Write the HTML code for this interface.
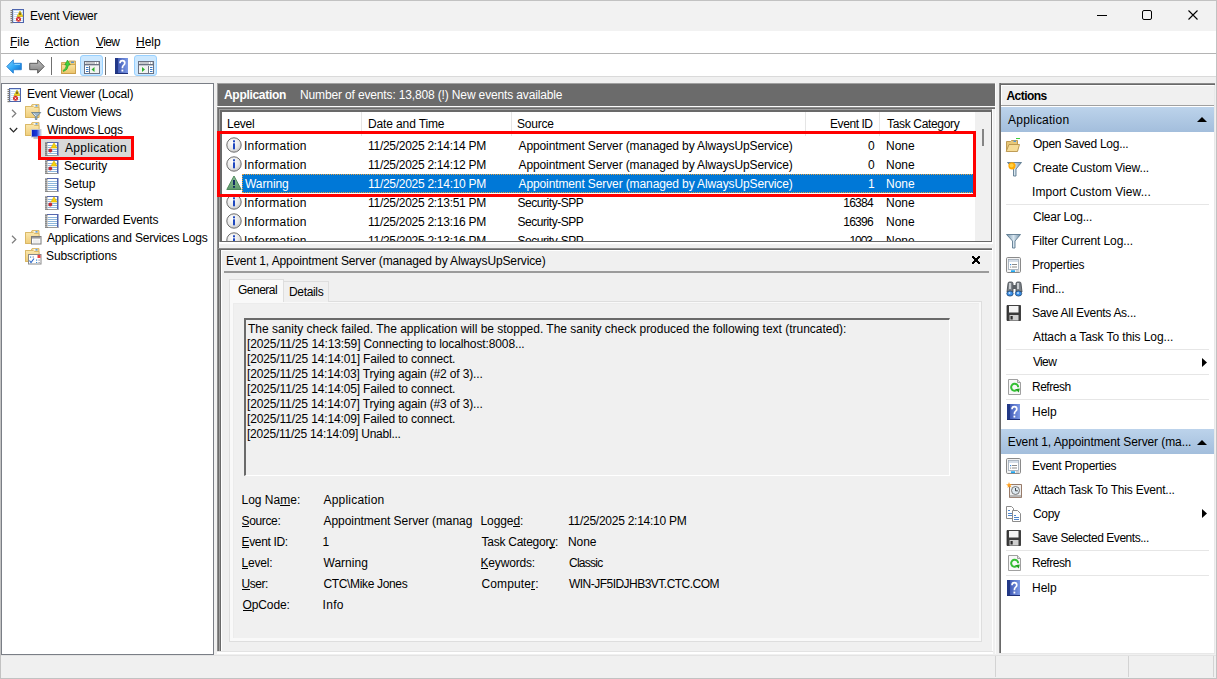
<!DOCTYPE html><html><head><meta charset="utf-8"><style>
*{margin:0;padding:0;box-sizing:border-box}
html,body{width:1217px;height:679px;overflow:hidden;background:#f0f0f0;font-family:"Liberation Sans",sans-serif;font-size:12px;color:#000}
.t{position:absolute;line-height:16px;white-space:nowrap}
.r{position:absolute}
.b{font-weight:bold}
.w{color:#fff}
u{text-decoration:none;position:relative}
u:after{content:"";position:absolute;left:0;right:0;bottom:1px;height:1px;background:#000}
svg{position:absolute;overflow:visible}
.clip{position:absolute;overflow:hidden}
</style></head><body><div class="r" style="left:0px;top:0px;width:1217px;height:31px;background:#f2f2f2"></div>
<div class="r" style="left:0px;top:31px;width:1217px;height:22px;background:#fff"></div>
<div class="r" style="left:0px;top:53px;width:1217px;height:1px;background:#b4b4b4"></div>
<div class="r" style="left:0px;top:54px;width:1217px;height:22px;background:#fff"></div>
<div class="r" style="left:0px;top:76px;width:1217px;height:1px;background:#dadada"></div>
<div class="r" style="left:0px;top:0px;width:1217px;height:1px;background:#c2c2c2"></div>
<div class="r" style="left:0px;top:0px;width:1px;height:679px;background:#c2c2c2"></div>
<div class="r" style="left:1216px;top:0px;width:1px;height:679px;background:#c2c2c2"></div>
<div class="r" style="left:0px;top:678px;width:1217px;height:1px;background:#c2c2c2"></div>
<div class="t " style="left:calc(31px + -1.00px);top:8px;letter-spacing:-0.273px;">Event Viewer</div>
<svg style="left:9px;top:8px" width="16" height="16" viewBox="0 0 16 16" shape-rendering="auto"><rect x="3.5" y="1.5" width="11" height="13" fill="#c9ddf3" stroke="#4d64ad"/>
<g fill="#ffffff"><rect x="5" y="3" width="8.5" height="1"/><rect x="5" y="5" width="8.5" height="1"/><rect x="5" y="7" width="8.5" height="1"/><rect x="5" y="9" width="8.5" height="1"/><rect x="5" y="11" width="8.5" height="1"/><rect x="5" y="13" width="8.5" height="1"/></g>
<g fill="#7a7a7a"><rect x="1.5" y="2" width="2.5" height="1.2"/><rect x="1.5" y="4" width="2.5" height="1.2"/><rect x="1.5" y="6" width="2.5" height="1.2"/><rect x="1.5" y="8" width="2.5" height="1.2"/><rect x="1.5" y="10" width="2.5" height="1.2"/><rect x="1.5" y="12" width="2.5" height="1.2"/><rect x="1.5" y="14" width="2.5" height="1.2"/></g>
<path d="M11 3 L14 8.5 L8 8.5 Z" fill="#f2d21a" stroke="#c8a800" stroke-width="0.6" stroke-linejoin="round"/>
<rect x="10.5" y="4.6" width="1" height="2.4" fill="#1a1a1a"/>
<circle cx="9.5" cy="11.3" r="2.5" fill="#d42a2a"/>
<path d="M8.7 10.5 L10.3 12.1 M10.3 10.5 L8.7 12.1" stroke="#fff" stroke-width="0.9"/></svg>
<div class="r" style="left:1097px;top:15px;width:10px;height:1px;background:#000"></div>
<div class="r" style="left:1142px;top:10px;width:10px;height:10px;border:1px solid #000;border-radius:2px"></div>
<svg style="left:1188px;top:10px" width="10" height="10" viewBox="0 0 10 10" shape-rendering="auto"><path d="M0.5 0.5 L9.5 9.5 M9.5 0.5 L0.5 9.5" stroke="#000" stroke-width="1.1"/></svg>
<div class="t " style="left:calc(11px + -1.00px);top:34px;letter-spacing:0.000px;"><u>F</u>ile</div>
<div class="t " style="left:calc(45px + 0.00px);top:34px;letter-spacing:0.200px;"><u>A</u>ction</div>
<div class="t " style="left:calc(96px + 0.00px);top:34px;letter-spacing:-0.667px;"><u>V</u>iew</div>
<div class="t " style="left:calc(137px + -1.00px);top:34px;letter-spacing:0.000px;"><u>H</u>elp</div>
<svg style="left:6px;top:59px" width="17" height="15" viewBox="0 0 17 15" shape-rendering="auto"><defs><linearGradient id="gb" x1="0" y1="0" x2="1" y2="1"><stop offset="0" stop-color="#7fd4ff"/><stop offset="0.5" stop-color="#2ea6f5"/><stop offset="1" stop-color="#0a62c4"/></linearGradient></defs>
<path d="M0.8 7.5 L7.3 0.8 L7.3 4.3 L15.3 4.3 L15.3 10.7 L7.3 10.7 L7.3 14.2 Z" fill="url(#gb)" stroke="#2f86d6" stroke-width="1" stroke-linejoin="round"/>
<path d="M8.5 5.5 L14 5.5" stroke="#9fdcff" stroke-width="0.8"/></svg>
<svg style="left:28px;top:59px" width="17" height="15" viewBox="0 0 17 15" shape-rendering="auto"><defs><linearGradient id="gg" x1="0" y1="0" x2="0" y2="1"><stop offset="0" stop-color="#c4c4c4"/><stop offset="1" stop-color="#7c7c7c"/></linearGradient></defs>
<path d="M16.2 7.5 L9.7 0.8 L9.7 4.3 L1.7 4.3 L1.7 10.7 L9.7 10.7 L9.7 14.2 Z" fill="url(#gg)" stroke="#5a5a5a" stroke-width="1" stroke-linejoin="round"/></svg>
<div class="r" style="left:51px;top:57px;width:1px;height:18px;background:#707070"></div>
<svg style="left:60px;top:58px" width="17" height="17" viewBox="0 0 17 17" shape-rendering="auto"><defs><linearGradient id="tfd" x1="0" y1="0" x2="0" y2="1"><stop offset="0" stop-color="#fae3a0"/><stop offset="1" stop-color="#eac36a"/></linearGradient></defs>
<path d="M1.5 4.5 L8 4.5 L9 3 L15.5 3 L15.5 15.5 L1.5 15.5 Z" fill="#eccb78" stroke="#c79a45" stroke-width="0.8"/>
<rect x="11" y="3.6" width="3" height="1.2" fill="#3d8be0"/>
<path d="M1.5 6.5 L15.5 6.5 L15.5 15.5 L1.5 15.5 Z" fill="url(#tfd)" stroke="#c79a45" stroke-width="0.8"/>
<path d="M3 12.5 Q6 11 6.5 7 L4.8 7 L7.5 2 L10.2 7 L8.5 7 Q8 12 3.5 13.5 Z" fill="#3fd23f" stroke="#1f9a1f" stroke-width="0.6" stroke-linejoin="round"/></svg>
<div class="r" style="left:80px;top:55px;width:23px;height:21px;background:#cce8ff;border:1px solid #99d1ff;border-radius:3px"></div>
<div class="r" style="left:134px;top:55px;width:23px;height:21px;background:#cce8ff;border:1px solid #99d1ff;border-radius:3px"></div>
<svg style="left:84px;top:61px" width="16" height="13" viewBox="0 0 16 13" shape-rendering="auto"><rect x="0.5" y="0.5" width="15" height="12" fill="#ffffff" stroke="#6b7282"/><rect x="1.5" y="1.5" width="9.5" height="1" fill="#8c9098"/><rect x="12" y="1.5" width="1" height="1" fill="#8c9098"/><rect x="14" y="1.5" width="1" height="1" fill="#8c9098"/><line x1="1" y1="3.5" x2="15" y2="3.5" stroke="#6b7282"/><rect x="1" y="4" width="14" height="1" fill="#c4c8d0"/><rect x="6" y="5" width="9" height="7" fill="#f2f2f2"/><line x1="5.5" y1="5" x2="5.5" y2="12" stroke="#6b7282"/><rect x="2" y="6" width="2.5" height="1" fill="#3a7cc8"/><rect x="2" y="8" width="2.5" height="1" fill="#3a7cc8"/><rect x="2" y="10" width="2.5" height="1" fill="#3a7cc8"/><path d="M10.5 6 L7.5 8.5 L10.5 11 Z" fill="#2cb02c"/></svg>
<svg style="left:138px;top:61px" width="16" height="13" viewBox="0 0 16 13" shape-rendering="auto"><rect x="0.5" y="0.5" width="15" height="12" fill="#ffffff" stroke="#6b7282"/><rect x="1.5" y="1.5" width="9.5" height="1" fill="#8c9098"/><rect x="12" y="1.5" width="1" height="1" fill="#8c9098"/><rect x="14" y="1.5" width="1" height="1" fill="#8c9098"/><line x1="1" y1="3.5" x2="15" y2="3.5" stroke="#6b7282"/><rect x="1" y="4" width="14" height="1" fill="#c4c8d0"/><rect x="1" y="5" width="9" height="7" fill="#f2f2f2"/><line x1="10.5" y1="5" x2="10.5" y2="12" stroke="#6b7282"/><rect x="12" y="6" width="2.5" height="1" fill="#3a7cc8"/><rect x="12" y="8" width="2.5" height="1" fill="#3a7cc8"/><rect x="12" y="10" width="2.5" height="1" fill="#3a7cc8"/><path d="M4 6 L7 8.5 L4 11 Z" fill="#2cb02c"/></svg>
<div class="r" style="left:105px;top:57px;width:1px;height:18px;background:#707070"></div>
<svg style="left:115px;top:58px" width="13" height="16" viewBox="0 0 13 16" shape-rendering="auto"><defs><linearGradient id="hq1" x1="0" y1="0" x2="1" y2="0"><stop offset="0" stop-color="#3049a8"/><stop offset="1" stop-color="#7d9ae6"/></linearGradient></defs>
<rect x="0" y="0" width="13" height="16" fill="url(#hq1)"/>
<rect x="0" y="0" width="3" height="16" fill="#223887"/>
<path d="M0 15 L13 15 L13 16 L0 16 Z" fill="#1d2f78"/>
<path d="M5 5.2 Q5 2.6 7.4 2.6 Q9.8 2.6 9.8 5 Q9.8 6.6 8.2 7.6 Q7.4 8.2 7.4 10.2" fill="none" stroke="#fff" stroke-width="1.7"/>
<rect x="6.5" y="11.6" width="1.8" height="1.9" fill="#fff"/></svg>
<div class="r" style="left:1px;top:83px;width:213px;height:572px;background:#fff;border:1px solid #7a7e86"></div>
<svg style="left:6px;top:87px" width="16" height="16" viewBox="0 0 16 16" shape-rendering="auto"><rect x="3.5" y="1.5" width="11" height="13" fill="#c9ddf3" stroke="#4d64ad"/>
<g fill="#ffffff"><rect x="5" y="3" width="8.5" height="1"/><rect x="5" y="5" width="8.5" height="1"/><rect x="5" y="7" width="8.5" height="1"/><rect x="5" y="9" width="8.5" height="1"/><rect x="5" y="11" width="8.5" height="1"/><rect x="5" y="13" width="8.5" height="1"/></g>
<g fill="#7a7a7a"><rect x="1.5" y="2" width="2.5" height="1.2"/><rect x="1.5" y="4" width="2.5" height="1.2"/><rect x="1.5" y="6" width="2.5" height="1.2"/><rect x="1.5" y="8" width="2.5" height="1.2"/><rect x="1.5" y="10" width="2.5" height="1.2"/><rect x="1.5" y="12" width="2.5" height="1.2"/><rect x="1.5" y="14" width="2.5" height="1.2"/></g>
<path d="M11 3 L14 8.5 L8 8.5 Z" fill="#f2d21a" stroke="#c8a800" stroke-width="0.6" stroke-linejoin="round"/>
<rect x="10.5" y="4.6" width="1" height="2.4" fill="#1a1a1a"/>
<circle cx="9.5" cy="11.3" r="2.5" fill="#d42a2a"/>
<path d="M8.7 10.5 L10.3 12.1 M10.3 10.5 L8.7 12.1" stroke="#fff" stroke-width="0.9"/></svg>
<div class="t " style="left:calc(28px + -1.00px);top:86px;letter-spacing:-0.211px;">Event Viewer (Local)</div>
<svg style="left:11px;top:109px" width="6" height="9" viewBox="0 0 6 9" shape-rendering="auto"><path d="M1 0.8 L4.8 4.5 L1 8.2" fill="none" stroke="#7d7d7d" stroke-width="1.2"/></svg>
<svg style="left:9px;top:127px" width="9" height="6" viewBox="0 0 9 6" shape-rendering="auto"><path d="M0.8 1 L4.5 4.8 L8.2 1" fill="none" stroke="#262626" stroke-width="1.2"/></svg>
<svg style="left:11px;top:235px" width="6" height="9" viewBox="0 0 6 9" shape-rendering="auto"><path d="M1 0.8 L4.8 4.5 L1 8.2" fill="none" stroke="#7d7d7d" stroke-width="1.2"/></svg>
<svg style="left:25px;top:104px" width="17" height="17" viewBox="0 0 17 17" shape-rendering="auto"><defs><linearGradient id="fd1" x1="0" y1="0" x2="0" y2="1"><stop offset="0" stop-color="#fbe7ad"/><stop offset="1" stop-color="#efcd7a"/></linearGradient></defs><path d="M0.5 2.5 L6 2.5 L7 0.5 L14 0.5 L14 13.5 L0.5 13.5 Z" fill="#f3d88f" stroke="#d6b25e" stroke-width="0.8"/><path d="M0.5 2.5 L8.5 2.5 L9.5 3.5 L14 3.5 L14 13.5 L0.5 13.5 Z" fill="url(#fd1)" stroke="#d6b25e" stroke-width="0.8"/><rect x="8.5" y="1.2" width="4" height="1.3" fill="#ffffff"/><rect x="10.5" y="1.2" width="2" height="1.3" fill="#3d8be0"/><path d="M6.5 8.5 L15.8 8.5 L12 12.5 L12 15.5 L10.3 15.5 L10.3 12.5 Z" fill="#9db6c8" stroke="#56707f" stroke-width="0.7" stroke-linejoin="round"/><path d="M8.5 9.5 L11 12" stroke="#eef4f8" stroke-width="0.8"/></svg>
<div class="t " style="left:calc(47px + 0.00px);top:104px;letter-spacing:-0.182px;">Custom Views</div>
<svg style="left:25px;top:122px" width="17" height="17" viewBox="0 0 17 17" shape-rendering="auto"><defs><linearGradient id="fd2" x1="0" y1="0" x2="0" y2="1"><stop offset="0" stop-color="#fbe7ad"/><stop offset="1" stop-color="#efcd7a"/></linearGradient></defs><path d="M0.5 2.5 L6 2.5 L7 0.5 L14 0.5 L14 13.5 L0.5 13.5 Z" fill="#f3d88f" stroke="#d6b25e" stroke-width="0.8"/><path d="M0.5 2.5 L8.5 2.5 L9.5 3.5 L14 3.5 L14 13.5 L0.5 13.5 Z" fill="url(#fd2)" stroke="#d6b25e" stroke-width="0.8"/><rect x="8.5" y="1.2" width="4" height="1.3" fill="#ffffff"/><rect x="10.5" y="1.2" width="2" height="1.3" fill="#3d8be0"/><defs><linearGradient id="mon" x1="0" y1="0" x2="1" y2="0"><stop offset="0" stop-color="#0a1ec0"/><stop offset="0.55" stop-color="#1a3ad8"/><stop offset="1" stop-color="#c8d8f4"/></linearGradient></defs><rect x="6.5" y="7.5" width="9.5" height="7.5" fill="url(#mon)" stroke="#c4c8d0" stroke-width="0.9"/><rect x="8.5" y="15.5" width="5" height="1" fill="#8a8a8a"/></svg>
<div class="t " style="left:calc(47px + 0.00px);top:122px;letter-spacing:-0.182px;">Windows Logs</div>
<div class="r" style="left:41px;top:139px;width:90px;height:18px;background:#d9d9d9"></div>
<div class="r" style="left:38px;top:136px;width:96px;height:24px;border:3px solid #ff0000"></div>
<svg style="left:44px;top:141px" width="15" height="16" viewBox="0 0 15 16" shape-rendering="auto"><rect x="3" y="1" width="11" height="13.5" fill="#ffffff"/><g fill="#8db6dc"><rect x="4" y="4" width="9" height="1"/><rect x="4" y="6" width="9" height="1"/><rect x="4" y="8" width="9" height="1"/><rect x="4" y="10" width="9" height="1"/><rect x="4" y="12" width="9" height="1"/></g><rect x="3" y="1" width="11" height="1" fill="#5668b0"/><rect x="13" y="1" width="1.5" height="14" fill="#4f62ad"/><rect x="3" y="14" width="11" height="1" fill="#9a9a9a"/><g fill="#5a5a5a"><rect x="1" y="1.5" width="2.5" height="1.2"/><rect x="1" y="3.5" width="2.5" height="1.2"/><rect x="1" y="5.5" width="2.5" height="1.2"/><rect x="1" y="7.5" width="2.5" height="1.2"/><rect x="1" y="9.5" width="2.5" height="1.2"/><rect x="1" y="11.5" width="2.5" height="1.2"/><rect x="1" y="13.5" width="2.5" height="1.2"/></g><path d="M10 1.8 L13 7 L7 7 Z" fill="#f5d20c" stroke="#d8b000" stroke-width="0.6" stroke-linejoin="round"/><circle cx="6.3" cy="9.5" r="1.9" fill="#c8282e"/></svg>
<div class="t " style="left:calc(65px + 0.00px);top:140px;letter-spacing:0.300px;">Application</div>
<svg style="left:44px;top:159px" width="15" height="16" viewBox="0 0 15 16" shape-rendering="auto"><rect x="3" y="1" width="11" height="13.5" fill="#ffffff"/><g fill="#8db6dc"><rect x="4" y="4" width="9" height="1"/><rect x="4" y="6" width="9" height="1"/><rect x="4" y="8" width="9" height="1"/><rect x="4" y="10" width="9" height="1"/><rect x="4" y="12" width="9" height="1"/></g><rect x="3" y="1" width="11" height="1" fill="#5668b0"/><rect x="13" y="1" width="1.5" height="14" fill="#4f62ad"/><rect x="3" y="14" width="11" height="1" fill="#9a9a9a"/><g fill="#5a5a5a"><rect x="1" y="1.5" width="2.5" height="1.2"/><rect x="1" y="3.5" width="2.5" height="1.2"/><rect x="1" y="5.5" width="2.5" height="1.2"/><rect x="1" y="7.5" width="2.5" height="1.2"/><rect x="1" y="9.5" width="2.5" height="1.2"/><rect x="1" y="11.5" width="2.5" height="1.2"/><rect x="1" y="13.5" width="2.5" height="1.2"/></g><path d="M10 1.8 L13 7 L7 7 Z" fill="#f5d20c" stroke="#d8b000" stroke-width="0.6" stroke-linejoin="round"/><circle cx="6.3" cy="9.5" r="1.9" fill="#c8282e"/></svg>
<div class="t " style="left:calc(65px + -1.00px);top:158px;letter-spacing:0.000px;">Security</div>
<svg style="left:44px;top:177px" width="15" height="16" viewBox="0 0 15 16" shape-rendering="auto"><rect x="3" y="1" width="11" height="13.5" fill="#ffffff"/><g fill="#8db6dc"><rect x="4" y="4" width="9" height="1"/><rect x="4" y="6" width="9" height="1"/><rect x="4" y="8" width="9" height="1"/><rect x="4" y="10" width="9" height="1"/><rect x="4" y="12" width="9" height="1"/></g><rect x="3" y="1" width="11" height="1" fill="#5668b0"/><rect x="13" y="1" width="1.5" height="14" fill="#4f62ad"/><rect x="3" y="14" width="11" height="1" fill="#9a9a9a"/><g fill="#5a5a5a"><rect x="1" y="1.5" width="2.5" height="1.2"/><rect x="1" y="3.5" width="2.5" height="1.2"/><rect x="1" y="5.5" width="2.5" height="1.2"/><rect x="1" y="7.5" width="2.5" height="1.2"/><rect x="1" y="9.5" width="2.5" height="1.2"/><rect x="1" y="11.5" width="2.5" height="1.2"/><rect x="1" y="13.5" width="2.5" height="1.2"/></g></svg>
<div class="t " style="left:calc(65px + -1.00px);top:176px;letter-spacing:0.000px;">Setup</div>
<svg style="left:44px;top:195px" width="15" height="16" viewBox="0 0 15 16" shape-rendering="auto"><rect x="3" y="1" width="11" height="13.5" fill="#ffffff"/><g fill="#8db6dc"><rect x="4" y="4" width="9" height="1"/><rect x="4" y="6" width="9" height="1"/><rect x="4" y="8" width="9" height="1"/><rect x="4" y="10" width="9" height="1"/><rect x="4" y="12" width="9" height="1"/></g><rect x="3" y="1" width="11" height="1" fill="#5668b0"/><rect x="13" y="1" width="1.5" height="14" fill="#4f62ad"/><rect x="3" y="14" width="11" height="1" fill="#9a9a9a"/><g fill="#5a5a5a"><rect x="1" y="1.5" width="2.5" height="1.2"/><rect x="1" y="3.5" width="2.5" height="1.2"/><rect x="1" y="5.5" width="2.5" height="1.2"/><rect x="1" y="7.5" width="2.5" height="1.2"/><rect x="1" y="9.5" width="2.5" height="1.2"/><rect x="1" y="11.5" width="2.5" height="1.2"/><rect x="1" y="13.5" width="2.5" height="1.2"/></g><path d="M10 1.8 L13 7 L7 7 Z" fill="#f5d20c" stroke="#d8b000" stroke-width="0.6" stroke-linejoin="round"/><circle cx="6.3" cy="9.5" r="1.9" fill="#c8282e"/></svg>
<div class="t " style="left:calc(65px + -1.00px);top:194px;letter-spacing:-0.200px;">System</div>
<svg style="left:44px;top:213px" width="15" height="16" viewBox="0 0 15 16" shape-rendering="auto"><rect x="3" y="1" width="11" height="13.5" fill="#ffffff"/><g fill="#8db6dc"><rect x="4" y="4" width="9" height="1"/><rect x="4" y="6" width="9" height="1"/><rect x="4" y="8" width="9" height="1"/><rect x="4" y="10" width="9" height="1"/><rect x="4" y="12" width="9" height="1"/></g><rect x="3" y="1" width="11" height="1" fill="#5668b0"/><rect x="13" y="1" width="1.5" height="14" fill="#4f62ad"/><rect x="3" y="14" width="11" height="1" fill="#9a9a9a"/><g fill="#5a5a5a"><rect x="1" y="1.5" width="2.5" height="1.2"/><rect x="1" y="3.5" width="2.5" height="1.2"/><rect x="1" y="5.5" width="2.5" height="1.2"/><rect x="1" y="7.5" width="2.5" height="1.2"/><rect x="1" y="9.5" width="2.5" height="1.2"/><rect x="1" y="11.5" width="2.5" height="1.2"/><rect x="1" y="13.5" width="2.5" height="1.2"/></g></svg>
<div class="t " style="left:calc(65px + -1.00px);top:212px;letter-spacing:-0.200px;">Forwarded Events</div>
<svg style="left:25px;top:230px" width="17" height="17" viewBox="0 0 17 17" shape-rendering="auto"><defs><linearGradient id="fd3" x1="0" y1="0" x2="0" y2="1"><stop offset="0" stop-color="#fbe7ad"/><stop offset="1" stop-color="#efcd7a"/></linearGradient></defs><path d="M0.5 2.5 L6 2.5 L7 0.5 L14 0.5 L14 13.5 L0.5 13.5 Z" fill="#f3d88f" stroke="#d6b25e" stroke-width="0.8"/><path d="M0.5 2.5 L8.5 2.5 L9.5 3.5 L14 3.5 L14 13.5 L0.5 13.5 Z" fill="url(#fd3)" stroke="#d6b25e" stroke-width="0.8"/><rect x="8.5" y="1.2" width="4" height="1.3" fill="#ffffff"/><rect x="10.5" y="1.2" width="2" height="1.3" fill="#3d8be0"/><rect x="6.5" y="6.5" width="9.5" height="7.5" fill="#ffffff" stroke="#7a7a7a"/><rect x="7" y="7" width="8.5" height="1.6" fill="#9a9a9a"/><rect x="8" y="9.5" width="6.5" height="3.5" fill="#eeeeee"/></svg>
<div class="t " style="left:calc(47px + 0.00px);top:230px;letter-spacing:-0.207px;">Applications and Services Logs</div>
<svg style="left:25px;top:248px" width="17" height="17" viewBox="0 0 17 17" shape-rendering="auto"><defs><linearGradient id="fd4" x1="0" y1="0" x2="0" y2="1"><stop offset="0" stop-color="#fbe7ad"/><stop offset="1" stop-color="#efcd7a"/></linearGradient></defs><path d="M0.5 2.5 L6 2.5 L7 0.5 L14 0.5 L14 13.5 L0.5 13.5 Z" fill="#f3d88f" stroke="#d6b25e" stroke-width="0.8"/><path d="M0.5 2.5 L8.5 2.5 L9.5 3.5 L14 3.5 L14 13.5 L0.5 13.5 Z" fill="url(#fd4)" stroke="#d6b25e" stroke-width="0.8"/><rect x="8.5" y="1.2" width="4" height="1.3" fill="#ffffff"/><rect x="10.5" y="1.2" width="2" height="1.3" fill="#3d8be0"/><rect x="3.5" y="6.5" width="12.5" height="9.5" fill="#ffffff" stroke="#8a8a8a"/><rect x="12.5" y="7" width="3" height="3" fill="#e84040"/><g fill="#3a8ad0"><rect x="5" y="8.5" width="1.2" height="1.2"/><rect x="11" y="11.5" width="1.2" height="1.2"/><rect x="11" y="14" width="1.2" height="1"/></g><g fill="#8a8aa0"><rect x="7.5" y="8.5" width="1.5" height="1"/><rect x="13.5" y="11.5" width="1.2" height="1.2"/><rect x="13.5" y="14" width="1.2" height="1"/></g><path d="M4.5 12.5 L6 14.5 L9 10.5" stroke="#2a66c8" stroke-width="1.1" fill="none"/></svg>
<div class="t " style="left:calc(47px + -1.00px);top:248px;letter-spacing:-0.083px;">Subscriptions</div>
<div class="r" style="left:217px;top:83px;width:778px;height:23px;background:#6b6b6b;border-top:1px solid #a0a0a0;border-left:1px solid #a0a0a0"></div>
<div class="r" style="left:217px;top:106px;width:778px;height:1px;background:#fbfbfb"></div>
<div class="t b w" style="left:calc(224px + 0.00px);top:87px;letter-spacing:-0.300px;">Application</div>
<div class="t w" style="left:calc(301px + -1.00px);top:87px;letter-spacing:-0.146px;">Number of events: 13,808 (!) New events available</div>
<div class="r" style="left:217px;top:107px;width:2px;height:546px;background:#6d6d6d;border-left:1px solid #8c8c8c"></div>
<div class="r" style="left:217px;top:107px;width:778px;height:2px;background:#6d6d6d;border-top:1px solid #8c8c8c;border-left:1px solid #8c8c8c"></div>
<div class="r" style="left:219px;top:109px;width:774px;height:1px;background:#a0a0a0"></div>
<div class="r" style="left:219px;top:109px;width:1px;height:133px;background:#a0a0a0"></div>
<div class="r" style="left:220px;top:110px;width:772px;height:2px;background:#696969"></div>
<div class="r" style="left:220px;top:110px;width:2px;height:132px;background:#696969"></div>
<div class="r" style="left:222px;top:241px;width:770px;height:1px;background:#696969"></div>
<div class="r" style="left:991px;top:112px;width:1px;height:130px;background:#696969"></div>
<div class="r" style="left:992px;top:109px;width:1px;height:134px;background:#ffffff"></div>
<div class="r" style="left:219px;top:242px;width:774px;height:2px;background:#ffffff"></div>
<div class="r" style="left:222px;top:112px;width:769px;height:129px;background:#fff"></div>
<div class="r" style="left:361px;top:112px;width:1px;height:24px;background:#e5e5e5"></div>
<div class="r" style="left:511px;top:112px;width:1px;height:24px;background:#e5e5e5"></div>
<div class="r" style="left:805px;top:112px;width:1px;height:24px;background:#e5e5e5"></div>
<div class="r" style="left:879px;top:112px;width:1px;height:24px;background:#e5e5e5"></div>
<div class="t " style="left:calc(228px + -1.00px);top:116px;letter-spacing:-0.250px;">Level</div>
<div class="t " style="left:calc(369px + -1.00px);top:116px;letter-spacing:-0.125px;">Date and Time</div>
<div class="t " style="left:calc(518px + -1.00px);top:116px;letter-spacing:-0.200px;">Source</div>
<div class="t " style="left:calc(831px + -1.00px);top:116px;letter-spacing:-0.429px;">Event ID</div>
<div class="t " style="left:calc(887px + 0.00px);top:116px;letter-spacing:-0.333px;">Task Category</div>
<div class="r" style="left:975px;top:112px;width:16px;height:129px;background:#f0f0f0"></div>
<div class="r" style="left:982px;top:129px;width:2px;height:17px;background:#858585"></div>
<div class="clip" style="left:222px;top:136px;width:753px;height:105px">
<svg style="left:4px;top:1px" width="16" height="16" viewBox="0 0 16 16">
<defs><radialGradient id="ig0" cx="0.4" cy="0.35" r="0.75"><stop offset="0" stop-color="#ffffff"/><stop offset="0.6" stop-color="#e6e6e6"/><stop offset="1" stop-color="#b8b8b8"/></radialGradient></defs>
<circle cx="8" cy="8" r="7.2" fill="url(#ig0)" stroke="#707070" stroke-width="1"/>
<rect x="7" y="6.3" width="2" height="6" fill="#1f48c0"/><rect x="7" y="3.3" width="2" height="2" fill="#1f48c0"/></svg>
<div class="t " style="left:calc(23px + -1.00px);top:2px;letter-spacing:0.250px;">Information</div>
<div class="t " style="left:calc(147px + -1.00px);top:2px;letter-spacing:-0.280px;">11/25/2025 2:14:14 PM</div>
<div class="t " style="left:calc(296.5px + 0.00px);top:2px;letter-spacing:-0.113px;">Appointment Server (managed by AlwaysUpService)</div>
<div class="t " style="left:calc(646px + 0.00px);top:2px;letter-spacing:0.000px;">0</div>
<div class="t " style="left:calc(665px + -1.00px);top:2px;letter-spacing:0.000px;">None</div>
<svg style="left:4px;top:20px" width="16" height="16" viewBox="0 0 16 16">
<defs><radialGradient id="ig1" cx="0.4" cy="0.35" r="0.75"><stop offset="0" stop-color="#ffffff"/><stop offset="0.6" stop-color="#e6e6e6"/><stop offset="1" stop-color="#b8b8b8"/></radialGradient></defs>
<circle cx="8" cy="8" r="7.2" fill="url(#ig1)" stroke="#707070" stroke-width="1"/>
<rect x="7" y="6.3" width="2" height="6" fill="#1f48c0"/><rect x="7" y="3.3" width="2" height="2" fill="#1f48c0"/></svg>
<div class="t " style="left:calc(23px + -1.00px);top:21px;letter-spacing:0.250px;">Information</div>
<div class="t " style="left:calc(147px + -1.00px);top:21px;letter-spacing:-0.280px;">11/25/2025 2:14:12 PM</div>
<div class="t " style="left:calc(296.5px + 0.00px);top:21px;letter-spacing:-0.113px;">Appointment Server (managed by AlwaysUpService)</div>
<div class="t " style="left:calc(646px + 0.00px);top:21px;letter-spacing:0.000px;">0</div>
<div class="t " style="left:calc(665px + -1.00px);top:21px;letter-spacing:0.000px;">None</div>
<div class="r" style="left:20px;top:38px;width:732px;height:19px;background:#0078d7;border:1px dotted #e8a040"></div>
<svg style="left:4px;top:39px" width="16" height="16" viewBox="0 0 16 16">
<defs><linearGradient id="wg" x1="0" y1="0" x2="0" y2="1"><stop offset="0" stop-color="#8fc09a"/><stop offset="1" stop-color="#5e9a6c"/></linearGradient></defs>
<path d="M8 1 L15.2 14.5 L0.8 14.5 Z" fill="url(#wg)" stroke="#4f8a5c" stroke-width="1" stroke-linejoin="round"/>
<rect x="7.1" y="5" width="1.8" height="5" fill="#0a2060"/><rect x="7.1" y="11" width="1.8" height="1.8" fill="#0a2060"/></svg>
<div class="t w" style="left:calc(23px + 0.00px);top:40px;letter-spacing:-0.083px;">Warning</div>
<div class="t w" style="left:calc(147px + -1.00px);top:40px;letter-spacing:-0.280px;">11/25/2025 2:14:10 PM</div>
<div class="t w" style="left:calc(296.5px + 0.00px);top:40px;letter-spacing:-0.113px;">Appointment Server (managed by AlwaysUpService)</div>
<div class="t w" style="left:calc(647px + -1.00px);top:40px;letter-spacing:0.000px;">1</div>
<div class="t w" style="left:calc(665px + -1.00px);top:40px;letter-spacing:0.000px;">None</div>
<svg style="left:4px;top:58px" width="16" height="16" viewBox="0 0 16 16">
<defs><radialGradient id="ig3" cx="0.4" cy="0.35" r="0.75"><stop offset="0" stop-color="#ffffff"/><stop offset="0.6" stop-color="#e6e6e6"/><stop offset="1" stop-color="#b8b8b8"/></radialGradient></defs>
<circle cx="8" cy="8" r="7.2" fill="url(#ig3)" stroke="#707070" stroke-width="1"/>
<rect x="7" y="6.3" width="2" height="6" fill="#1f48c0"/><rect x="7" y="3.3" width="2" height="2" fill="#1f48c0"/></svg>
<div class="t " style="left:calc(23px + -1.00px);top:59px;letter-spacing:0.250px;">Information</div>
<div class="t " style="left:calc(147px + -1.00px);top:59px;letter-spacing:-0.280px;">11/25/2025 2:13:51 PM</div>
<div class="t " style="left:calc(296.5px + -1.00px);top:59px;letter-spacing:-0.455px;">Security-SPP</div>
<div class="t " style="left:calc(622.3px + -1.00px);top:59px;letter-spacing:-0.775px;">16384</div>
<div class="t " style="left:calc(665px + -1.00px);top:59px;letter-spacing:0.000px;">None</div>
<svg style="left:4px;top:77px" width="16" height="16" viewBox="0 0 16 16">
<defs><radialGradient id="ig4" cx="0.4" cy="0.35" r="0.75"><stop offset="0" stop-color="#ffffff"/><stop offset="0.6" stop-color="#e6e6e6"/><stop offset="1" stop-color="#b8b8b8"/></radialGradient></defs>
<circle cx="8" cy="8" r="7.2" fill="url(#ig4)" stroke="#707070" stroke-width="1"/>
<rect x="7" y="6.3" width="2" height="6" fill="#1f48c0"/><rect x="7" y="3.3" width="2" height="2" fill="#1f48c0"/></svg>
<div class="t " style="left:calc(23px + -1.00px);top:78px;letter-spacing:0.250px;">Information</div>
<div class="t " style="left:calc(147px + -1.00px);top:78px;letter-spacing:-0.280px;">11/25/2025 2:13:16 PM</div>
<div class="t " style="left:calc(296.5px + -1.00px);top:78px;letter-spacing:-0.455px;">Security-SPP</div>
<div class="t " style="left:calc(622.3px + -1.00px);top:78px;letter-spacing:-0.775px;">16396</div>
<div class="t " style="left:calc(665px + -1.00px);top:78px;letter-spacing:0.000px;">None</div>
<svg style="left:4px;top:96px" width="16" height="16" viewBox="0 0 16 16">
<defs><radialGradient id="ig5" cx="0.4" cy="0.35" r="0.75"><stop offset="0" stop-color="#ffffff"/><stop offset="0.6" stop-color="#e6e6e6"/><stop offset="1" stop-color="#b8b8b8"/></radialGradient></defs>
<circle cx="8" cy="8" r="7.2" fill="url(#ig5)" stroke="#707070" stroke-width="1"/>
<rect x="7" y="6.3" width="2" height="6" fill="#1f48c0"/><rect x="7" y="3.3" width="2" height="2" fill="#1f48c0"/></svg>
<div class="t " style="left:calc(23px + -1.00px);top:97px;letter-spacing:0.250px;">Information</div>
<div class="t " style="left:calc(147px + -1.00px);top:97px;letter-spacing:-0.280px;">11/25/2025 2:13:16 PM</div>
<div class="t " style="left:calc(296.5px + -1.00px);top:97px;letter-spacing:-0.455px;">Security-SPP</div>
<div class="t " style="left:calc(628.5px + -1.00px);top:97px;letter-spacing:-1.100px;">1003</div>
<div class="t " style="left:calc(665px + -1.00px);top:97px;letter-spacing:0.000px;">None</div>
</div>
<div class="r" style="left:217px;top:131px;width:759px;height:66px;border:3px solid #ff0000"></div>
<div class="r" style="left:217px;top:248px;width:776px;height:2px;background:#696969;border-top:1px solid #8c8c8c;border-left:1px solid #8c8c8c"></div>
<div class="r" style="left:219px;top:250px;width:1px;height:402px;background:#a0a0a0"></div>
<div class="r" style="left:220px;top:250px;width:1px;height:402px;background:#696969"></div>
<div class="r" style="left:221px;top:250px;width:771px;height:1px;background:#ffffff"></div>
<div class="r" style="left:221px;top:250px;width:1px;height:402px;background:#ffffff"></div>
<div class="r" style="left:992px;top:248px;width:1px;height:405px;background:#ffffff"></div>
<div class="r" style="left:217px;top:651px;width:776px;height:1px;background:#e3e3e3"></div>
<div class="r" style="left:217px;top:652px;width:776px;height:1px;background:#ffffff"></div>
<div class="r" style="left:217px;top:653px;width:776px;height:1px;background:#ffffff"></div>
<div class="r" style="left:995px;top:83px;width:1px;height:571px;background:#fbfbfb"></div>
<div class="t " style="left:calc(227px + -1.00px);top:253px;letter-spacing:-0.118px;">Event 1, Appointment Server (managed by AlwaysUpService)</div>
<svg style="left:972px;top:256px" width="8" height="8" viewBox="0 0 8 8" shape-rendering="crispEdges"><g fill="#000"><rect x="0" y="0" width="1" height="1"/><rect x="1" y="0" width="1" height="1"/><rect x="6" y="0" width="1" height="1"/><rect x="7" y="0" width="1" height="1"/><rect x="0" y="1" width="1" height="1"/><rect x="1" y="1" width="1" height="1"/><rect x="2" y="1" width="1" height="1"/><rect x="5" y="1" width="1" height="1"/><rect x="6" y="1" width="1" height="1"/><rect x="7" y="1" width="1" height="1"/><rect x="1" y="2" width="1" height="1"/><rect x="2" y="2" width="1" height="1"/><rect x="3" y="2" width="1" height="1"/><rect x="4" y="2" width="1" height="1"/><rect x="5" y="2" width="1" height="1"/><rect x="6" y="2" width="1" height="1"/><rect x="2" y="3" width="1" height="1"/><rect x="3" y="3" width="1" height="1"/><rect x="4" y="3" width="1" height="1"/><rect x="5" y="3" width="1" height="1"/><rect x="2" y="4" width="1" height="1"/><rect x="3" y="4" width="1" height="1"/><rect x="4" y="4" width="1" height="1"/><rect x="5" y="4" width="1" height="1"/><rect x="1" y="5" width="1" height="1"/><rect x="2" y="5" width="1" height="1"/><rect x="3" y="5" width="1" height="1"/><rect x="4" y="5" width="1" height="1"/><rect x="5" y="5" width="1" height="1"/><rect x="6" y="5" width="1" height="1"/><rect x="0" y="6" width="1" height="1"/><rect x="1" y="6" width="1" height="1"/><rect x="2" y="6" width="1" height="1"/><rect x="5" y="6" width="1" height="1"/><rect x="6" y="6" width="1" height="1"/><rect x="7" y="6" width="1" height="1"/><rect x="0" y="7" width="1" height="1"/><rect x="1" y="7" width="1" height="1"/><rect x="6" y="7" width="1" height="1"/><rect x="7" y="7" width="1" height="1"/></g></svg>
<div class="r" style="left:224px;top:271px;width:765px;height:2px;background:#9b9b9b"></div>
<div class="r" style="left:229px;top:301px;width:753px;height:341px;border:1px solid #dedede;background:#f9f9f9"></div>
<div class="r" style="left:233px;top:303px;width:746px;height:335px;background:#f0f0f0;border-left:1px solid #ececec;border-top:1px solid #ececec"></div>
<div class="r" style="left:283px;top:281px;width:46px;height:21px;border:1px solid #dedede;border-bottom:none;background:#f0f0f0"></div>
<div class="r" style="left:229px;top:279px;width:55px;height:23px;border:1px solid #dedede;border-bottom:none;background:#f9f9f9"></div>
<div class="t " style="left:calc(238px + 0.00px);top:282px;letter-spacing:-0.500px;">General</div>
<div class="t " style="left:calc(290px + -1.00px);top:284px;letter-spacing:-0.333px;">Details</div>
<div class="r" style="left:244px;top:318px;width:706px;height:158px;border-top:2px solid #6a6a6a;border-left:2px solid #6a6a6a;border-right:1px solid #ffffff;border-bottom:1px solid #ffffff;background:#f0f0f0"></div>
<div class="t " style="left:calc(248px + 0.00px);top:321px;letter-spacing:-0.013px;">The sanity check failed. The application will be stopped. The sanity check produced the following text (truncated):</div>
<div class="t " style="left:calc(248px + -1.00px);top:336px;letter-spacing:-0.121px;">[2025/11/25 14:13:59] Connecting to localhost:8008...</div>
<div class="t " style="left:calc(248px + -1.00px);top:351px;letter-spacing:-0.141px;">[2025/11/25 14:14:01] Failed to connect.</div>
<div class="t " style="left:calc(248px + -1.00px);top:366px;letter-spacing:-0.148px;">[2025/11/25 14:14:03] Trying again (#2 of 3)...</div>
<div class="t " style="left:calc(248px + -1.00px);top:381px;letter-spacing:-0.141px;">[2025/11/25 14:14:05] Failed to connect.</div>
<div class="t " style="left:calc(248px + -1.00px);top:396px;letter-spacing:-0.148px;">[2025/11/25 14:14:07] Trying again (#3 of 3)...</div>
<div class="t " style="left:calc(248px + -1.00px);top:411px;letter-spacing:-0.141px;">[2025/11/25 14:14:09] Failed to connect.</div>
<div class="t " style="left:calc(248px + -1.00px);top:426px;letter-spacing:-0.228px;">[2025/11/25 14:14:09] Unabl...</div>
<div class="t " style="left:calc(242.5px + -1.00px);top:492px;letter-spacing:0.000px;">Log Na<u>m</u>e:</div>
<div class="t " style="left:calc(323.5px + 0.00px);top:492px;letter-spacing:0.200px;">Application</div>
<div class="t " style="left:calc(242.5px + -1.00px);top:513px;letter-spacing:-0.350px;"><u>S</u>ource:</div>
<div class="t " style="left:calc(323.5px + 0.00px);top:513px;letter-spacing:-0.050px;">Appointment Server (manag</div>
<div class="t " style="left:calc(481.5px + -1.00px);top:513px;letter-spacing:-0.083px;">Logge<u>d</u>:</div>
<div class="t " style="left:calc(569px + -1.00px);top:513px;letter-spacing:-0.260px;">11/25/2025 2:14:10 PM</div>
<div class="t " style="left:calc(242.5px + -1.00px);top:534px;letter-spacing:-0.350px;"><u>E</u>vent ID:</div>
<div class="t " style="left:calc(323.5px + -1.00px);top:534px;letter-spacing:0.000px;">1</div>
<div class="t " style="left:calc(481.5px + 0.00px);top:534px;letter-spacing:-0.254px;">Task Categor<u>y</u>:</div>
<div class="t " style="left:calc(569px + -1.00px);top:534px;letter-spacing:-0.100px;">None</div>
<div class="t " style="left:calc(242.5px + -1.00px);top:555px;letter-spacing:-0.200px;"><u>L</u>evel:</div>
<div class="t " style="left:calc(323.5px + 0.00px);top:555px;letter-spacing:0.017px;">Warning</div>
<div class="t " style="left:calc(481.5px + -1.00px);top:555px;letter-spacing:-0.175px;"><u>K</u>eywords:</div>
<div class="t " style="left:calc(569px + 0.00px);top:555px;letter-spacing:-0.733px;">Classic</div>
<div class="t " style="left:calc(242.5px + -1.00px);top:576px;letter-spacing:-0.475px;"><u>U</u>ser:</div>
<div class="t " style="left:calc(323.5px + 0.00px);top:576px;letter-spacing:-0.346px;">CTC\Mike Jones</div>
<div class="t " style="left:calc(481.5px + 0.00px);top:576px;letter-spacing:0.125px;">Compute<u>r</u>:</div>
<div class="t " style="left:calc(569px + 0.00px);top:576px;letter-spacing:-0.523px;">WIN-JF5IDJHB3VT.CTC.COM</div>
<div class="t " style="left:calc(242.5px + 0.00px);top:597px;letter-spacing:-0.100px;"><u>O</u>pCode:</div>
<div class="t " style="left:calc(323.5px + -1.00px);top:597px;letter-spacing:0.333px;">Info</div>
<div class="r" style="left:999px;top:83px;width:216px;height:571px;background:#fff"></div>
<div class="r" style="left:999px;top:83px;width:216px;height:2px;background:#696969;border-top:1px solid #8c8c8c"></div>
<div class="r" style="left:999px;top:83px;width:2px;height:571px;background:#696969;border-left:1px solid #8c8c8c"></div>
<div class="r" style="left:1214px;top:85px;width:1px;height:569px;background:#e8e8e8"></div>
<div class="r" style="left:999px;top:653px;width:216px;height:1px;background:#e8e8e8"></div>
<div class="r" style="left:1002px;top:86px;width:212px;height:19px;background:#f0f0f0"></div>
<div class="r" style="left:1001px;top:105px;width:213px;height:1px;background:#a0a0a0"></div>
<div class="t b" style="left:calc(1006.5px + 0.00px);top:88px;letter-spacing:-0.550px;">Actions</div>
<div class="r" style="left:1001px;top:107px;width:213px;height:25px;background:linear-gradient(#bcd3eb,#a3bedc)"></div>
<div class="t " style="left:calc(1008px + 0.00px);top:112px;letter-spacing:0.240px;">Application</div>
<svg style="left:1197px;top:117px" width="10" height="5" viewBox="0 0 10 5" shape-rendering="auto"><path d="M0 5 L5 0 L10 5 Z" fill="#000"/></svg>
<div class="r" style="left:1001px;top:429px;width:213px;height:25px;background:linear-gradient(#bcd3eb,#a3bedc)"></div>
<div class="t " style="left:calc(1008.8px + -1.00px);top:434px;letter-spacing:-0.094px;">Event 1, Appointment Server (ma...</div>
<svg style="left:1197px;top:440px" width="10" height="5" viewBox="0 0 10 5" shape-rendering="auto"><path d="M0 5 L5 0 L10 5 Z" fill="#000"/></svg>
<svg style="left:1005px;top:137px" width="17" height="16" viewBox="0 0 17 16" shape-rendering="auto"><rect x="11" y="1" width="4" height="1" fill="#3ccc3c"/><path d="M1.5 4.5 L5.5 4.5 L6.5 3.5 L12.5 3.5 L12.5 13.5 L1.5 13.5 Z" fill="#e8c878" stroke="#b8934a" stroke-width="0.9"/><rect x="8.5" y="3.6" width="2.5" height="1.3" fill="#4a94dc"/><path d="M4 7.5 L14.5 7.5 L12.5 14.5 L1.2 14.5 Z" fill="#f6dc96" stroke="#b8934a" stroke-width="0.9"/></svg>
<div class="t " style="left:calc(1033px + 0.00px);top:136px;letter-spacing:-0.281px;">Open Saved Log...</div>
<svg style="left:1007px;top:162px" width="16" height="16" viewBox="0 0 16 16" shape-rendering="auto"><defs><linearGradient id="fgfilter2160" x1="0" y1="0" x2="1" y2="0"><stop offset="0" stop-color="#6f8ea6"/><stop offset="0.5" stop-color="#d8e6f0"/><stop offset="1" stop-color="#6f8ea6"/></linearGradient></defs><path d="M0.5 0.5 L14.5 0.5 L9 7 L9 14 L6.5 14 L6.5 7 Z" fill="url(#fgfilter2160)" stroke="#5e7a90" stroke-width="0.9" stroke-linejoin="round"/><circle cx="5" cy="3.8" r="3.6" fill="#ffa800"/><circle cx="4.6" cy="3.4" r="2" fill="#ffd040"/></svg>
<div class="t " style="left:calc(1033px + 0.00px);top:160px;letter-spacing:-0.150px;">Create Custom View...</div>
<div class="t " style="left:calc(1033px + -1.00px);top:184px;letter-spacing:0.085px;">Import Custom View...</div>
<div class="r" style="left:1006px;top:204px;width:203px;height:1px;background:#e6e6e6"></div>
<div class="t " style="left:calc(1033px + 0.00px);top:209px;letter-spacing:-0.255px;">Clear Log...</div>
<svg style="left:1006px;top:234px" width="16" height="16" viewBox="0 0 16 16" shape-rendering="auto"><defs><linearGradient id="fgfilter233" x1="0" y1="0" x2="1" y2="0"><stop offset="0" stop-color="#6f8ea6"/><stop offset="0.5" stop-color="#d8e6f0"/><stop offset="1" stop-color="#6f8ea6"/></linearGradient></defs><path d="M0.5 0.5 L14.5 0.5 L9 7 L9 14 L6.5 14 L6.5 7 Z" fill="url(#fgfilter233)" stroke="#5e7a90" stroke-width="0.9" stroke-linejoin="round"/></svg>
<div class="t " style="left:calc(1033px + -1.00px);top:233px;letter-spacing:-0.120px;">Filter Current Log...</div>
<svg style="left:1006px;top:257px" width="16" height="16" viewBox="0 0 16 16" shape-rendering="auto"><rect x="0.5" y="0.5" width="14" height="15" rx="1.2" fill="#f2f2f2" stroke="#8a8a8a"/><rect x="2.5" y="2.5" width="10" height="10" fill="#fff" stroke="#9aa6b4" stroke-width="0.8"/><rect x="3" y="3" width="9" height="2" fill="#d4dde8"/><rect x="4" y="7" width="1.2" height="1.2" fill="#3b8ee0"/><rect x="4" y="9.5" width="1.2" height="1.2" fill="#9a9a9a"/><rect x="6" y="7" width="5" height="1" fill="#8a8a8a"/><rect x="6" y="9.5" width="5" height="1" fill="#8a8a8a"/><rect x="5" y="13.3" width="4" height="1.7" fill="#1ea6f0"/><rect x="10" y="13.5" width="3" height="1" fill="#b0b0b0"/></svg>
<div class="t " style="left:calc(1033px + -1.00px);top:257px;letter-spacing:-0.244px;">Properties</div>
<svg style="left:1006px;top:281px" width="17" height="16" viewBox="0 0 17 16" shape-rendering="auto"><path d="M2 2.5 Q2 1 3.5 1 L5.5 1 Q7 1 7 2.5 L7 11 L1 11 Z" fill="#7c8288" stroke="#3e4348" stroke-width="0.8"/><path d="M10 2.5 Q10 1 11.5 1 L13.5 1 Q15 1 15 2.5 L16 11 L10 11 Z" fill="#7c8288" stroke="#3e4348" stroke-width="0.8"/><rect x="3" y="2" width="2" height="6" fill="#c8ccd0"/><rect x="11" y="2" width="2" height="6" fill="#c8ccd0"/><rect x="7" y="4" width="3" height="4" fill="#5a6066"/><ellipse cx="4" cy="12.5" rx="3.2" ry="2.6" fill="#3a8ee8" stroke="#23476e" stroke-width="0.8"/><ellipse cx="12.5" cy="12.5" rx="3.2" ry="2.6" fill="#3a8ee8" stroke="#23476e" stroke-width="0.8"/><circle cx="3.5" cy="12" r="1" fill="#bfe0ff"/><circle cx="12" cy="12" r="1" fill="#bfe0ff"/></svg>
<div class="t " style="left:calc(1033px + -1.00px);top:281px;letter-spacing:-0.117px;">Find...</div>
<svg style="left:1006px;top:305px" width="16" height="16" viewBox="0 0 16 16" shape-rendering="auto"><path d="M1 0.5 L14.5 0.5 L14.5 15.5 L1 15.5 Z" fill="#3c3c3c" stroke="#2a2a2a" stroke-width="0.8"/><rect x="3" y="1" width="9.5" height="6.5" fill="#f4f4f4"/><rect x="3.5" y="10" width="9" height="5.5" fill="#cfcfcf"/><rect x="4.5" y="11" width="2.2" height="3.5" fill="#2c2c2c"/></svg>
<div class="t " style="left:calc(1033px + -1.00px);top:305px;letter-spacing:-0.290px;">Save All Events As...</div>
<div class="t " style="left:calc(1033px + 0.00px);top:329px;letter-spacing:-0.100px;">Attach a Task To this Log...</div>
<div class="r" style="left:1006px;top:349px;width:203px;height:1px;background:#e6e6e6"></div>
<div class="t " style="left:calc(1033px + 0.00px);top:354px;letter-spacing:-0.667px;">View</div>
<div class="r" style="left:1006px;top:374px;width:203px;height:1px;background:#e6e6e6"></div>
<svg style="left:1008px;top:379px" width="14" height="17" viewBox="0 0 14 17" shape-rendering="auto"><path d="M0.5 0.5 L9.5 0.5 L12.5 3.5 L12.5 15.5 L0.5 15.5 Z" fill="#f8f8f8" stroke="#a0a0a0"/><path d="M9.5 0.5 L9.5 3.5 L12.5 3.5" fill="#e0e0e0" stroke="#a0a0a0"/><path d="M8.6 11.2 A3.5 3.5 0 1 1 10.2 8.2" fill="none" stroke="#34c034" stroke-width="2"/><path d="M7.2 10.2 L11.8 9.4 L10.8 13.6 Z" fill="#20a020"/></svg>
<div class="t " style="left:calc(1033px + -1.00px);top:379px;letter-spacing:-0.483px;">Refresh</div>
<div class="r" style="left:1006px;top:399px;width:203px;height:1px;background:#e6e6e6"></div>
<svg style="left:1007px;top:404px" width="13" height="16" viewBox="0 0 13 16" shape-rendering="auto"><defs><linearGradient id="hq2" x1="0" y1="0" x2="1" y2="0"><stop offset="0" stop-color="#3049a8"/><stop offset="1" stop-color="#7d9ae6"/></linearGradient></defs>
<rect x="0" y="0" width="13" height="16" fill="url(#hq2)"/>
<rect x="0" y="0" width="3" height="16" fill="#223887"/>
<path d="M0 15 L13 15 L13 16 L0 16 Z" fill="#1d2f78"/>
<path d="M5 5.2 Q5 2.6 7.4 2.6 Q9.8 2.6 9.8 5 Q9.8 6.6 8.2 7.6 Q7.4 8.2 7.4 10.2" fill="none" stroke="#fff" stroke-width="1.7"/>
<rect x="6.5" y="11.6" width="1.8" height="1.9" fill="#fff"/></svg>
<div class="t " style="left:calc(1033px + -1.00px);top:404px;letter-spacing:0.000px;">Help</div>
<svg style="left:1006px;top:458px" width="16" height="16" viewBox="0 0 16 16" shape-rendering="auto"><rect x="0.5" y="0.5" width="14" height="15" rx="1.2" fill="#f2f2f2" stroke="#8a8a8a"/><rect x="2.5" y="2.5" width="10" height="10" fill="#fff" stroke="#9aa6b4" stroke-width="0.8"/><rect x="3" y="3" width="9" height="2" fill="#d4dde8"/><rect x="4" y="7" width="1.2" height="1.2" fill="#3b8ee0"/><rect x="4" y="9.5" width="1.2" height="1.2" fill="#9a9a9a"/><rect x="6" y="7" width="5" height="1" fill="#8a8a8a"/><rect x="6" y="9.5" width="5" height="1" fill="#8a8a8a"/><rect x="5" y="13.3" width="4" height="1.7" fill="#1ea6f0"/><rect x="10" y="13.5" width="3" height="1" fill="#b0b0b0"/></svg>
<div class="t " style="left:calc(1033px + -1.00px);top:458px;letter-spacing:-0.273px;">Event Properties</div>
<svg style="left:1006px;top:482px" width="17" height="16" viewBox="0 0 17 16" shape-rendering="auto"><path d="M3.5 2.5 L15.5 2.5 L15.5 15.5 L3.5 15.5 Z" fill="#efefef" stroke="#8c6c58" stroke-width="0.9"/><rect x="4" y="13" width="11" height="2.2" fill="#b8b8b8"/><circle cx="9.5" cy="8.5" r="4" fill="#dde8f0" stroke="#6a6a6a" stroke-width="0.9"/><path d="M9.5 6 L9.5 8.8 L11.8 8.8" stroke="#333" stroke-width="0.9" fill="none"/><path d="M3 0 L3.8 2.2 L6 2 L4.4 3.4 L5.6 5.4 L3.3 4.4 L1.6 6 L1.9 3.8 L0 2.6 L2.2 2.2 Z" fill="#ffa020"/></svg>
<div class="t " style="left:calc(1033px + 0.00px);top:482px;letter-spacing:-0.204px;">Attach Task To This Event...</div>
<svg style="left:1006px;top:506px" width="17" height="17" viewBox="0 0 17 17" shape-rendering="auto"><path d="M0.5 0.5 L5.5 0.5 L7.5 2.5 L7.5 12.5 L0.5 12.5 Z" fill="#fff" stroke="#8c8c8c"/><path d="M6.5 4.5 L11.5 4.5 L14.5 7.5 L14.5 15.5 L6.5 15.5 Z" fill="#fff" stroke="#8c8c8c"/><g fill="#4f86cc"><rect x="2" y="4" width="2" height="1"/><rect x="2" y="7" width="4" height="1"/><rect x="2" y="9" width="4" height="1"/><rect x="8" y="9" width="2" height="1"/><rect x="8" y="11" width="5" height="1"/><rect x="8" y="13" width="5" height="1"/></g></svg>
<div class="t " style="left:calc(1033px + 0.00px);top:506px;letter-spacing:-0.333px;">Copy</div>
<svg style="left:1006px;top:530px" width="16" height="16" viewBox="0 0 16 16" shape-rendering="auto"><path d="M1 0.5 L14.5 0.5 L14.5 15.5 L1 15.5 Z" fill="#3c3c3c" stroke="#2a2a2a" stroke-width="0.8"/><rect x="3" y="1" width="9.5" height="6.5" fill="#f4f4f4"/><rect x="3.5" y="10" width="9" height="5.5" fill="#cfcfcf"/><rect x="4.5" y="11" width="2.2" height="3.5" fill="#2c2c2c"/></svg>
<div class="t " style="left:calc(1033px + -1.00px);top:530px;letter-spacing:-0.459px;">Save Selected Events...</div>
<div class="r" style="left:1006px;top:550px;width:203px;height:1px;background:#e6e6e6"></div>
<svg style="left:1008px;top:555px" width="14" height="17" viewBox="0 0 14 17" shape-rendering="auto"><path d="M0.5 0.5 L9.5 0.5 L12.5 3.5 L12.5 15.5 L0.5 15.5 Z" fill="#f8f8f8" stroke="#a0a0a0"/><path d="M9.5 0.5 L9.5 3.5 L12.5 3.5" fill="#e0e0e0" stroke="#a0a0a0"/><path d="M8.6 11.2 A3.5 3.5 0 1 1 10.2 8.2" fill="none" stroke="#34c034" stroke-width="2"/><path d="M7.2 10.2 L11.8 9.4 L10.8 13.6 Z" fill="#20a020"/></svg>
<div class="t " style="left:calc(1033px + -1.00px);top:555px;letter-spacing:-0.483px;">Refresh</div>
<div class="r" style="left:1006px;top:575px;width:203px;height:1px;background:#e6e6e6"></div>
<svg style="left:1007px;top:580px" width="13" height="16" viewBox="0 0 13 16" shape-rendering="auto"><defs><linearGradient id="hq3" x1="0" y1="0" x2="1" y2="0"><stop offset="0" stop-color="#3049a8"/><stop offset="1" stop-color="#7d9ae6"/></linearGradient></defs>
<rect x="0" y="0" width="13" height="16" fill="url(#hq3)"/>
<rect x="0" y="0" width="3" height="16" fill="#223887"/>
<path d="M0 15 L13 15 L13 16 L0 16 Z" fill="#1d2f78"/>
<path d="M5 5.2 Q5 2.6 7.4 2.6 Q9.8 2.6 9.8 5 Q9.8 6.6 8.2 7.6 Q7.4 8.2 7.4 10.2" fill="none" stroke="#fff" stroke-width="1.7"/>
<rect x="6.5" y="11.6" width="1.8" height="1.9" fill="#fff"/></svg>
<div class="t " style="left:calc(1033px + -1.00px);top:580px;letter-spacing:0.000px;">Help</div>
<svg style="left:1202px;top:358px" width="5" height="9" viewBox="0 0 5 9" shape-rendering="auto"><path d="M0 0 L5 4.5 L0 9 Z" fill="#000"/></svg>
<svg style="left:1202px;top:509px" width="5" height="9" viewBox="0 0 5 9" shape-rendering="auto"><path d="M0 0 L5 4.5 L0 9 Z" fill="#000"/></svg>
<div class="r" style="left:1px;top:655px;width:1215px;height:1px;background:#e3e3e3"></div>
<div class="r" style="left:995px;top:656px;width:1px;height:21px;background:#d3d3d3"></div>
<div class="r" style="left:1128px;top:656px;width:1px;height:21px;background:#d3d3d3"></div>
<div class="r" style="left:1213px;top:656px;width:1px;height:21px;background:#d3d3d3"></div></body></html>
